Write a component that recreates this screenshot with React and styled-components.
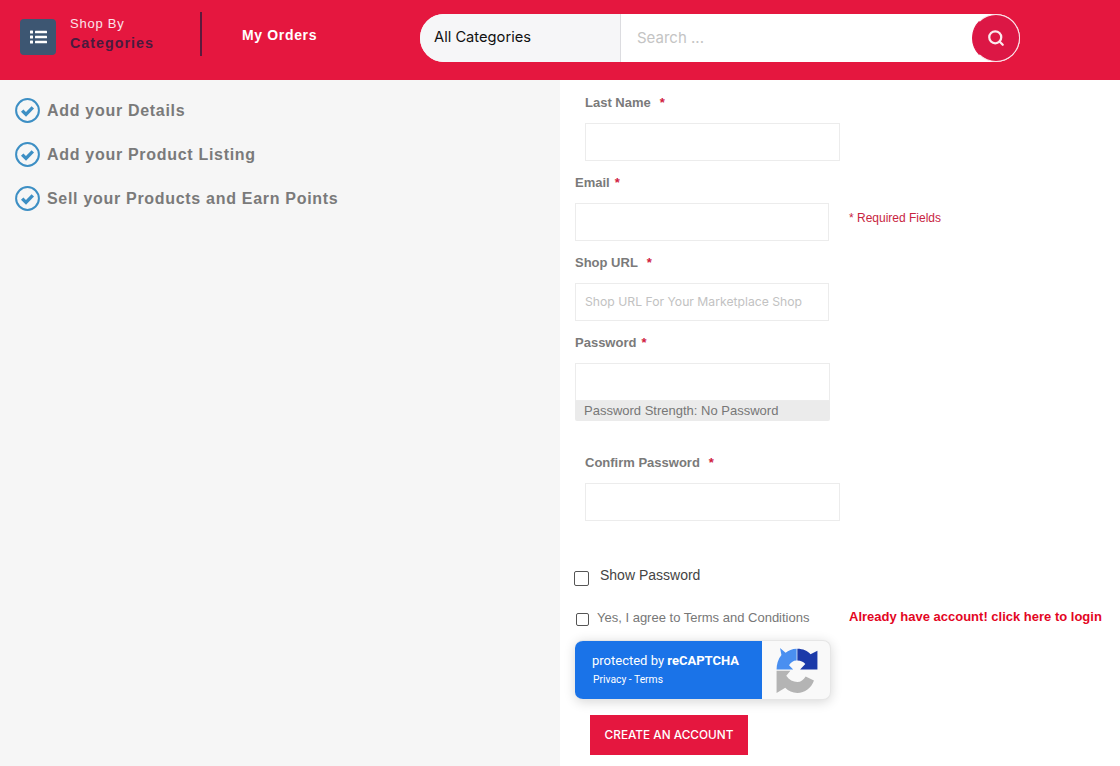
import React from 'react';
import styled, { createGlobalStyle } from 'styled-components';
import { Search } from 'lucide-react';

const red = '#e5173f';
const labelGrey = '#7a7a7a';
const poppins = '"Inter", "Noto Sans", sans-serif';

const GlobalStyle = createGlobalStyle`
  html, body {
    margin: 0;
    padding: 0;
    background: #fff;
    font-family: "Liberation Sans", Arial, sans-serif;
  }
  * {
    box-sizing: border-box;
  }
`;

const Page = styled.div`
  width: 1120px;
  height: 766px;
  overflow: hidden;
  display: flex;
  flex-direction: column;
`;

const Header = styled.header`
  height: 80px;
  flex: none;
  background: ${red};
  display: flex;
  align-items: flex-start;
`;

const CategoryMenu = styled.div`
  width: 182px;
  height: 44px;
  margin: 12px 0 0 20px;
  display: flex;
  align-items: flex-start;
  border-right: 2px solid #5c1a3c;
`;

const MenuIcon = styled.span`
  width: 36px;
  height: 36px;
  margin-top: 7px;
  border-radius: 4px;
  background: #3d5672;
  display: flex;
  align-items: center;
  justify-content: center;
`;

const MenuText = styled.div`
  margin: 3px 0 0 14px;
`;

const ShopBy = styled.div`
  font-size: 13px;
  line-height: 17px;
  letter-spacing: 0.75px;
  color: #fbe4ea;
`;

const Categories = styled.div`
  margin-top: 3px;
  font-size: 14.3px;
  line-height: 17px;
  font-weight: 700;
  letter-spacing: 1px;
  color: #4a1a3e;
`;

const OrdersLink = styled.a`
  margin: 26px 0 0 40px;
  width: 178px;
  font-size: 14px;
  line-height: 18px;
  font-weight: 700;
  letter-spacing: 0.65px;
  color: #fff;
`;

const SearchBar = styled.div`
  width: 600px;
  height: 48px;
  margin-top: 14px;
  border-radius: 24px;
  background: #fff;
  display: flex;
  align-items: stretch;
  font-family: ${poppins};
`;

const CategorySelect = styled.div`
  width: 201px;
  padding-left: 14px;
  border-radius: 24px 0 0 24px;
  border-right: 1px solid #dcdce0;
  background: #f6f6f8;
  color: #111;
  font-size: 14.7px;
  line-height: 46px;
`;

const SearchHint = styled.div`
  flex: 1;
  padding-left: 16px;
  color: #c4c4c4;
  font-size: 15px;
  line-height: 48px;
`;

const SearchButton = styled.button`
  flex: none;
  width: 48px;
  height: 48px;
  padding: 0;
  border: 1.5px solid #fbe4ea;
  border-left-color: #dc1745;
  border-radius: 50%;
  background: #dc1745;
  color: #fbeaee;
  display: flex;
  align-items: center;
  justify-content: center;
`;

const Body = styled.main`
  flex: 1;
  display: flex;
`;

const Sidebar = styled.ul`
  width: 560px;
  margin: 0;
  padding: 8px 0 0 15px;
  list-style: none;
  background: #f6f6f6;
`;

const Step = styled.li`
  height: 44px;
  display: flex;
  align-items: center;
  gap: 7px;
`;

const StepText = styled.span`
  padding-top: 2px;
  color: ${labelGrey};
  font-size: 16px;
  font-weight: 700;
  letter-spacing: 0.7px;
`;

const FormColumn = styled.form`
  flex: 1;
  padding: 12px 0 0 15px;
`;

const Field = styled.div`
  width: ${(p) => (p.$wide ? '255px' : '254px')};
  height: ${(p) => (p.$tall ? '120px' : '80px')};
  margin-left: ${(p) => (p.$indent ? '10px' : '0')};
`;

const FieldRow = styled.div`
  display: flex;
`;

const Label = styled.label`
  display: block;
  height: 31px;
  padding-top: 1px;
  font-size: 13px;
  line-height: 20px;
  font-weight: 700;
  color: ${labelGrey};
`;

const Star = styled.span`
  margin-left: ${(p) => p.$gap}px;
  color: #d0213f;
`;

const Input = styled.input`
  display: block;
  width: 100%;
  height: 38px;
  padding: 0 9px 2px;
  border: 1px solid #ececec;
  outline: none;
  background: #fff;
  font-family: ${poppins};
  font-size: 12.2px;
  &::placeholder {
    color: #c2c2c2;
    opacity: 1;
  }
`;

const RequiredNote = styled.div`
  margin: 31px 0 0 20px;
  font-size: 12px;
  line-height: 30px;
  color: #c8243f;
`;

const Strength = styled.div`
  height: 20px;
  padding-left: 9px;
  border-radius: 0 0 2px 2px;
  background: #ebebeb;
  color: #777;
  font-size: 13px;
  line-height: 20px;
`;

const ShowPassword = styled.div`
  margin-top: 34px;
  height: 39px;
  display: flex;
  align-items: flex-start;
  font-size: 14px;
  line-height: 18px;
  color: #444;
`;

const Box = styled.span`
  flex: none;
  width: ${(p) => p.$size}px;
  height: ${(p) => p.$size}px;
  border: 1px solid #555;
  border-radius: 2px;
  background: #fff;
`;

const ShowBox = styled(Box)`
  margin: 5px 11px 0 -1px;
`;

const TermsRow = styled.div`
  display: flex;
  align-items: center;
  height: 24px;
`;

const TermsBox = styled(Box)`
  margin: 4px 8px 0 1px;
`;

const TermsText = styled.span`
  width: 252px;
  font-size: 13px;
  color: #777;
`;

const LoginLink = styled.a`
  margin-top: -2px;
  font-size: 13px;
  font-weight: 700;
  color: #e3061f;
`;

const Recaptcha = styled.div`
  width: 256px;
  height: 60px;
  margin-top: 11px;
  display: flex;
  border: 1px solid #e6e6e6;
  border-left: none;
  border-radius: 8px;
  overflow: hidden;
  background: #f9f9f9;
  box-shadow: 0 2px 12px rgba(0, 0, 0, 0.16);
`;

const RecaptchaText = styled.div`
  width: 187px;
  padding: 11px 0 0 17px;
  background: #1a73e8;
  color: #fff;
  font-family: "Roboto", sans-serif;
`;

const Protected = styled.div`
  font-size: 13px;
  line-height: 17px;
  b {
    font-weight: 700;
  }
`;

const RecaptchaLinks = styled.div`
  margin: 4px 0 0 1px;
  font-size: 10.3px;
  line-height: 14px;
`;

const RecaptchaLogo = styled.div`
  flex: 1;
  display: flex;
  align-items: center;
  justify-content: center;
  padding-left: 1px;
`;

const SubmitButton = styled.button`
  display: block;
  width: 158px;
  height: 40px;
  margin: 15px 0 0 15px;
  padding: 0;
  border: none;
  background: ${red};
  color: #fff;
  font-family: ${poppins};
  font-size: 11.8px;
  font-weight: 500;
`;

const ListGlyph = () => (
  <svg width="17" height="14" viewBox="0 0 17 14" fill="#fff">
    <rect x="0" y="0.500" width="3" height="3" rx="0.500" />
    <rect x="0" y="5.500" width="3" height="3" rx="0.500" />
    <rect x="0" y="10.500" width="3" height="3" rx="0.500" />
    <rect x="5" y="0.700" width="12" height="2.600" rx="0.500" />
    <rect x="5" y="5.700" width="12" height="2.600" rx="0.500" />
    <rect x="5" y="10.700" width="12" height="2.600" rx="0.500" />
  </svg>
);

const CheckCircle = () => (
  <svg width="25" height="25" viewBox="0 0 25 25" fill="none">
    <circle cx="12.5" cy="12.5" r="11.4" stroke="#3d8fc4" strokeWidth="2" />
    <path d="M7.2 12.6l3.800 3.800 6.800-7" stroke="#3d8fc4" strokeWidth="3.400" />
  </svg>
);

const RecaptchaMark = () => (
  <svg width="42" height="45" viewBox="52 30 118 130">
    <path d="M112 32C128 32 142 38 150 48L170 38V92H120L135 76C130 70 122 66 112 66Z" fill="#1c3aa9" />
    <path d="M62 30L78 44C86 37 97 32 110 32V66C100 66 92 72 88 80L100 92H52C52 78 56 62 66 50Z" fill="#4a8ff0" />
    <path d="M52 96H92L80 110C88 122 100 128 112 128C122 128 130 122 136 112L160 124C152 146 134 160 112 160C98 160 86 154 77 145L52 160Z" fill="#b4b4b4" />
  </svg>
);

function App() {
  return (
    <Page>
      <GlobalStyle />
      <Header>
        <CategoryMenu>
          <MenuIcon>
            <ListGlyph />
          </MenuIcon>
          <MenuText>
            <ShopBy>Shop By</ShopBy>
            <Categories>Categories</Categories>
          </MenuText>
        </CategoryMenu>
        <OrdersLink>My Orders</OrdersLink>
        <SearchBar>
          <CategorySelect>All Categories</CategorySelect>
          <SearchHint>Search ...</SearchHint>
          <SearchButton type="button" aria-label="Search">
            <Search size={18} strokeWidth={3} />
          </SearchButton>
        </SearchBar>
      </Header>
      <Body>
        <Sidebar>
          {['Add your Details', 'Add your Product Listing', 'Sell your Products and Earn Points'].map((step) => (
            <Step key={step}>
              <CheckCircle />
              <StepText>{step}</StepText>
            </Step>
          ))}
        </Sidebar>
        <FormColumn>
          <Field $indent $wide>
            <Label>
              Last Name<Star $gap={9}>*</Star>
            </Label>
            <Input />
          </Field>
          <FieldRow>
            <Field>
              <Label>
                Email<Star $gap={5}>*</Star>
              </Label>
              <Input />
            </Field>
            <RequiredNote>* Required Fields</RequiredNote>
          </FieldRow>
          <Field>
            <Label>
              Shop URL<Star $gap={9}>*</Star>
            </Label>
            <Input placeholder="Shop URL For Your Marketplace Shop" />
          </Field>
          <Field $wide $tall>
            <Label>
              Password<Star $gap={5}>*</Star>
            </Label>
            <Input />
            <Strength>Password Strength: No Password</Strength>
          </Field>
          <Field $indent $wide>
            <Label>
              Confirm Password<Star $gap={9}>*</Star>
            </Label>
            <Input />
          </Field>
          <ShowPassword>
            <ShowBox $size={15} />
            Show Password
          </ShowPassword>
          <TermsRow>
            <TermsBox $size={13} />
            <TermsText>Yes, I agree to Terms and Conditions</TermsText>
            <LoginLink>Already have account! click here to login</LoginLink>
          </TermsRow>
          <Recaptcha>
            <RecaptchaText>
              <Protected>
                protected by <b>reCAPTCHA</b>
              </Protected>
              <RecaptchaLinks>Privacy - Terms</RecaptchaLinks>
            </RecaptchaText>
            <RecaptchaLogo>
              <RecaptchaMark />
            </RecaptchaLogo>
          </Recaptcha>
          <SubmitButton type="button">CREATE AN ACCOUNT</SubmitButton>
        </FormColumn>
      </Body>
    </Page>
  );
}

export default App;
